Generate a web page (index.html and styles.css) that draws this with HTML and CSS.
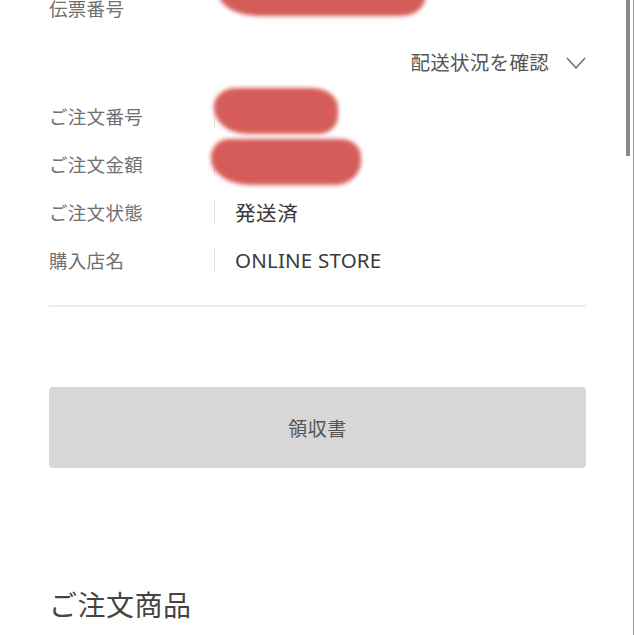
FILE: index.html
```html
<!DOCTYPE html>
<html lang="ja">
<head>
<meta charset="utf-8">
<link rel="stylesheet" href="styles.css">
</head>
<body>
<div class="page">
  <div class="info">
    <div class="row">
      <div class="label">伝票番号</div>
      <div class="value"></div>
      <span class="redact r1"></span>
    </div>
    <div class="track">
      <span class="track-text">配送状況を確認</span>
      <svg class="chev" width="20" height="14" viewBox="0 0 20 14"><polyline points="1,2 10,12 19,2" fill="none" stroke="#666" stroke-width="1.4"/></svg>
    </div>
    <div class="row">
      <div class="label">ご注文番号</div>
      <div class="value sep"></div>
      <span class="redact r2"></span>
    </div>
    <div class="row">
      <div class="label">ご注文金額</div>
      <div class="value sep"></div>
      <span class="redact r3"></span>
    </div>
    <div class="row">
      <div class="label">ご注文状態</div>
      <div class="value sep">発送済</div>
    </div>
    <div class="row">
      <div class="label">購入店名</div>
      <div class="value sep latin">ONLINE STORE</div>
    </div>
  </div>
  <hr class="divider">
  <div class="btn">領収書</div>
  <h2 class="heading">ご注文商品</h2>
</div>
<div class="scroll-track"></div>
<div class="scroll-thumb"></div>
</body>
</html>
```
FILE: styles.css
```css
html, body {
  margin: 0;
  padding: 0;
  background: #fff;
  overflow: hidden;
}
body {
  font-family: "Noto Sans CJK JP", "Noto Sans", sans-serif;
  width: 635px;
  height: 635px;
  position: relative;
}
.page {
  padding: 0 49px;
  margin-top: -16px;
}
.info {
  display: flex;
  flex-direction: column;
}
.row {
  position: relative;
  display: flex;
  align-items: center;
  height: 48px;
}
.label {
  width: 165px;
  font-size: 18.5px;
  color: #6f6f6f;
  letter-spacing: 0.3px;
  line-height: 1;
}
.value {
  font-size: 20.5px;
  color: #3a3a3a;
  padding-left: 20px;
  line-height: 24px;
  height: 24px;
  letter-spacing: 0.6px;
}
.value.sep {
  border-left: 1px solid #e2e2e2;
}
.value.latin {
  font-family: "Noto Sans", sans-serif;
  letter-spacing: 0.2px;
  font-size: 20.5px;
}
.track {
  height: 60px;
  display: flex;
  align-items: center;
  justify-content: flex-end;
  gap: 17px;
}
.track-text {
  font-size: 19.5px;
  color: #555;
  letter-spacing: 0.3px;
  line-height: 1;
}
.chev {
  margin-right: 0;
  margin-top: 1px;
}
.redact {
  position: absolute;
  background: #d65c59;
  filter: blur(2px);
}
.r1 {
  left: 170px;
  top: -6px;
  width: 206px;
  height: 38px;
  border-radius: 12px 20px 24px 40px / 10px 18px 18px 22px;
}
.r2 {
  left: 165px;
  top: -4px;
  width: 124px;
  height: 46px;
  border-radius: 22px 26px 20px 34px / 18px 20px 18px 26px;
}
.r3 {
  left: 162px;
  top: -1px;
  width: 150px;
  height: 46px;
  border-radius: 18px 20px 26px 40px / 18px 18px 24px 26px;
}
.divider {
  border: 0;
  height: 2px;
  background: #ececec;
  margin: 21px 0 0 0;
}
.btn {
  margin-top: 80px;
  height: 81px;
  background: #d7d7d7;
  border-radius: 4px;
  display: flex;
  align-items: center;
  justify-content: center;
  font-size: 19px;
  color: #555;
  letter-spacing: 0.5px;
}
.heading {
  margin: 116px 0 0 0;
  font-size: 28px;
  font-weight: 400;
  color: #444;
  line-height: 40px;
  letter-spacing: 0.5px;
}
.scroll-track {
  position: absolute;
  top: 0;
  right: 1px;
  width: 1px;
  height: 635px;
  background: #999;
}
.scroll-thumb {
  position: absolute;
  top: 0;
  left: 626px;
  width: 4px;
  height: 156px;
  background: #8a8a8a;
}
```
